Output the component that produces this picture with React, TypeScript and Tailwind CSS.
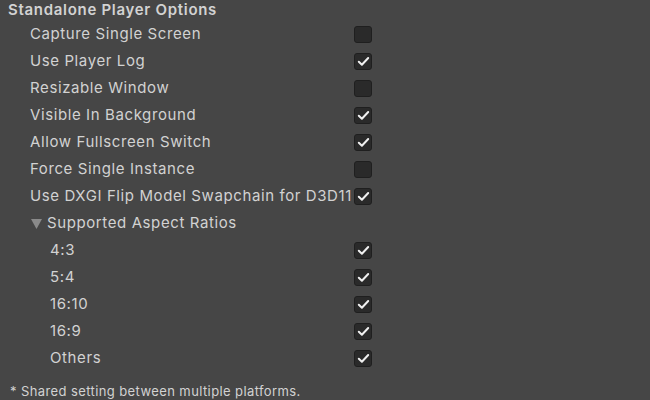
import React from 'react';

type Opt = { label: string; checked: boolean };

const options: Opt[] = [
  { label: 'Capture Single Screen', checked: false },
  { label: 'Use Player Log', checked: true },
  { label: 'Resizable Window', checked: false },
  { label: 'Visible In Background', checked: true },
  { label: 'Allow Fullscreen Switch', checked: true },
  { label: 'Force Single Instance', checked: false },
  { label: 'Use DXGI Flip Model Swapchain for D3D11', checked: true },
];

const ratios: Opt[] = [
  { label: '4:3', checked: true },
  { label: '5:4', checked: true },
  { label: '16:10', checked: true },
  { label: '16:9', checked: true },
  { label: 'Others', checked: true },
];

function Checkbox({ checked }: { checked: boolean }) {
  return (
    <div className="w-[18px] h-[17px] rounded-[3px] bg-[#2a2a2a] border border-[#1f1f1f] flex items-center justify-center">
      {checked && (
        <svg width="13" height="11" viewBox="0 0 13 11" fill="none">
          <path d="M1.8 5.8 L4.9 8.7 L11.2 2" stroke="#f0f0f0" strokeWidth="2" strokeLinecap="round" strokeLinejoin="round" />
        </svg>
      )}
    </div>
  );
}

function Row({ opt, indent }: { opt: Opt; indent: string }) {
  return (
    <div className="h-[27px] flex items-center">
      <div className={`w-[354px] ${indent} whitespace-nowrap`}>{opt.label}</div>
      <Checkbox checked={opt.checked} />
    </div>
  );
}

export default function App() {
  return (
    <div
      className="w-[650px] h-[400px] bg-[#464646] text-[#d2d2d2] text-[15px] tracking-[0.6px] overflow-hidden"
      style={{ fontFamily: 'Inter, "Noto Sans", sans-serif' }}
    >
      <div className="h-[20px] flex items-center pl-[8px] font-semibold tracking-[0.7px]">Standalone Player Options</div>
      <div className="pt-[1px]">
        {options.map((o) => (
          <Row key={o.label} opt={o} indent="pl-[30px]" />
        ))}
        <div className="h-[27px] flex items-center pl-[31px]">
          <svg width="11" height="10" viewBox="0 0 11 10" className="mr-[5px]">
            <path d="M0 0 H11 L5.5 10 Z" fill="#8a8a8a" />
          </svg>
          <span>Supported Aspect Ratios</span>
        </div>
        {ratios.map((o) => (
          <Row key={o.label} opt={o} indent="pl-[50px]" />
        ))}
      </div>
      <div className="pl-[10px] pt-[10px] text-[13px] tracking-[0.4px]">* Shared setting between multiple platforms.</div>
    </div>
  );
}
